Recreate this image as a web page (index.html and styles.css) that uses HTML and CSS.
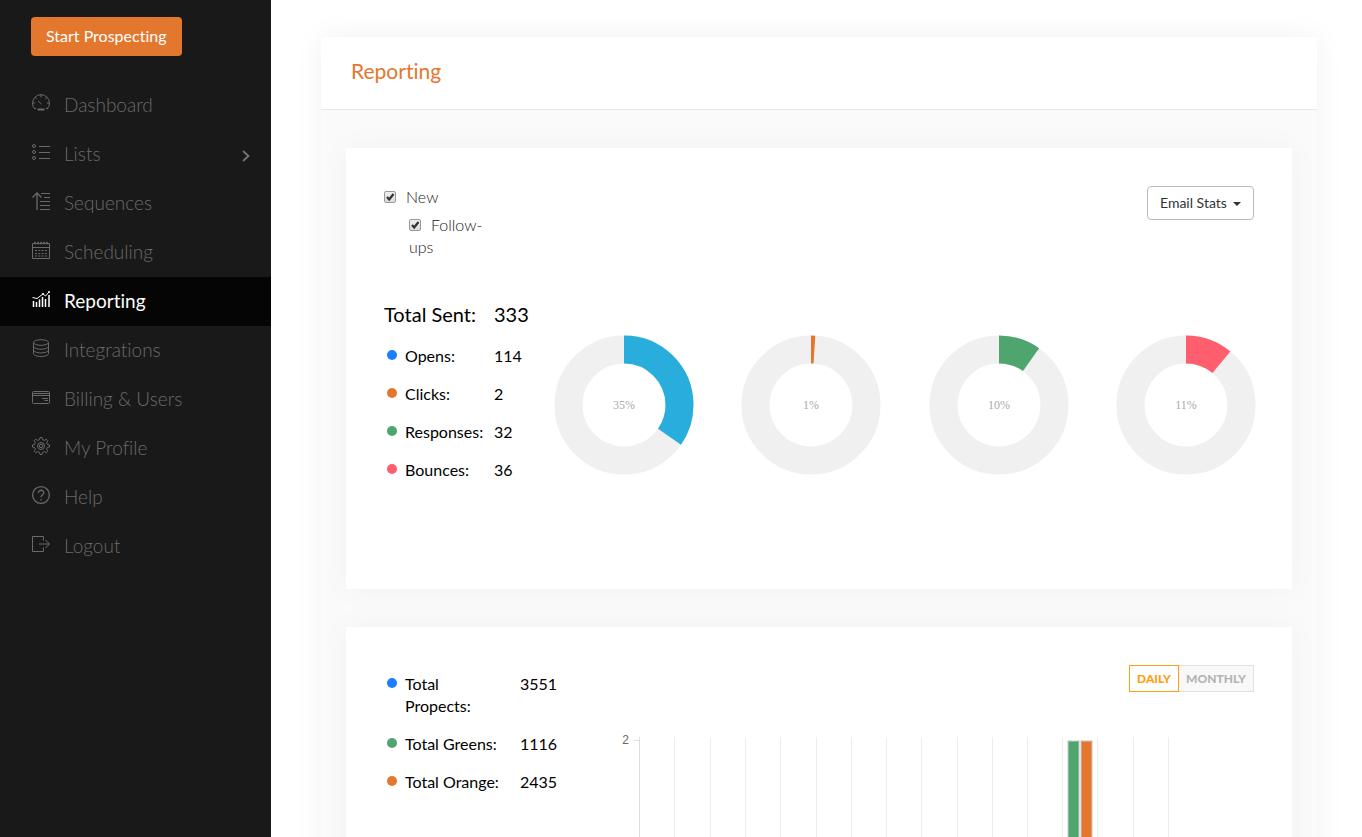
FILE: index.html
```html
<!DOCTYPE html>
<html lang="en">
<head>
    <meta charset="UTF-8">
    <meta name="viewport" content="width=device-width, initial-scale=1.0">
    <title>Reporting</title>
    <link rel="stylesheet" href="styles.css">
</head>
<body>
    <aside class="sidebar">
        <button type="button" class="btn-start">Start Prospecting</button>
        <nav>
            <a href="#" class="nav-item">
                <svg class="icon" viewBox="0 0 18 18"><path d="M4 14l-1.200 1A8.500 8.500 0 1 1 15.200 15L14 14M9 .8v2.700M.8 9h2.400M14.800 9h2.400M3.200 3.500l1.600 1.600M14.800 3.500l-1.600 1.600M6 7l3.500 3"/><path d="M5.500 15.500h7" stroke-width="2"/></svg>
                <span>Dashboard</span>
            </a>
            <a href="#" class="nav-item">
                <svg class="icon" viewBox="0 0 18 18"><circle cx="2" cy="3" r="1.500"/><circle cx="2" cy="9" r="1.500"/><circle cx="2" cy="15" r="1.500"/><path d="M7 3.500h11M7 9.500h11M7 15.500h11"/></svg>
                <span>Lists</span>
                <svg class="arrow" viewBox="0 0 10 14"><path d="M2 2l5.500 5L2 12"/></svg>
            </a>
            <a href="#" class="nav-item">
                <svg class="icon" viewBox="0 0 18 18"><path d="M5 18V1.500M.5 5.500L5 1l4.500 4.500" stroke-width="1.300"/><path d="M9 1.500h9M12 5.500h6M8 9.500h10M8 13.500h10M8 17.500h10"/></svg>
                <span>Sequences</span>
            </a>
            <a href="#" class="nav-item">
                <svg class="icon" viewBox="0 0 18 18"><path d="M.5 2.500h17v15H.5zM.5 6.500h17"/><path d="M3 .8v2.500M6 .8v2.500M9 .8v2.500M12 .8v2.500M15 .8v2.500" stroke-width="1.500"/><path d="M3 9.500h12M3 12.500h12M3 15h12" stroke-dasharray="2 1.300"/></svg>
                <span>Scheduling</span>
            </a>
            <a href="#" class="nav-item active">
                <svg class="icon" viewBox="0 0 18 18"><path d="M1.500 11v6M4.500 12v5M7.500 9.500V17M10.500 7v10M13.500 9v8M17 5v12" stroke-width="1.500"/><path d="M.5 7.500l4.500 1 6-4.500 2.500 2L17 2"/><circle cx="17" cy="2" r=".7"/><circle cx="11" cy="4" r=".7"/></svg>
                <span>Reporting</span>
            </a>
            <a href="#" class="nav-item">
                <svg class="icon" viewBox="0 0 18 18"><ellipse cx="9" cy="3.500" rx="7.500" ry="2.800"/><path d="M1.500 3.500v11c0 1.700 3.300 3 7.500 3s7.500-1.300 7.500-3v-11M1.500 7.200c0 1.700 3.300 3 7.500 3s7.500-1.300 7.500-3M1.500 10.900c0 1.700 3.300 3 7.500 3s7.500-1.300 7.500-3"/></svg>
                <span>Integrations</span>
            </a>
            <a href="#" class="nav-item">
                <svg class="icon" viewBox="0 0 18 18"><rect x=".5" y="3.500" width="17" height="12" rx="1"/><path d="M.5 5.500h17M.5 7.500h17M10 10.500h6M12.500 12.500h3.500"/></svg>
                <span>Billing &amp; Users</span>
            </a>
            <a href="#" class="nav-item">
                <svg class="icon" viewBox="0 0 18 18"><path d="M7.400 2.700L8 .5h2l.6 2.200 1.700.7 2-1.200 1.500 1.500-1.200 2 .7 1.700 2.200.6v2l-2.200.6-.7 1.700 1.200 2-1.500 1.500-2-1.200-1.700.7-.6 2.200H8l-.6-2.200-1.700-.7-2 1.200-1.500-1.500 1.200-2-.7-1.700L.5 10V8l2.200-.6.7-1.700-1.200-2 1.500-1.500 2 1.200z"/><circle cx="9" cy="9" r="3.500"/><circle cx="9" cy="9" r="1.700"/></svg>
                <span>My Profile</span>
            </a>
            <a href="#" class="nav-item">
                <svg class="icon help" viewBox="0 0 18 18"><circle cx="9" cy="9" r="8.400"/><path d="M6.300 7C6.300 3.200 12 3.500 11.800 6.800 11.600 8.800 9 8.800 9 11.300M9 13v1.500"/></svg>
                <span>Help</span>
            </a>
            <a href="#" class="nav-item">
                <svg class="icon" viewBox="0 0 18 18"><path d="M11.500 5.500v-4H.5v15h11v-4M7 9h10.500M13.500 5l4 4-4 4"/></svg>
                <span>Logout</span>
            </a>
        </nav>
    </aside>

    <main class="content">
        <section class="panel">
            <h1 class="panel-title">Reporting</h1>
            <div class="panel-body">

                <div class="card email-card">
                    <div class="card-top">
                        <div class="filters">
                            <label><input type="checkbox" checked>New</label>
                            <label class="sub"><input type="checkbox" checked>Follow-ups</label>
                        </div>
                        <div class="select-wrap">
                            <select aria-label="Stats type">
                                <option>Email Stats</option>
                            </select>
                        </div>
                    </div>
                    <div class="stats-row">
                        <table class="stats">
                            <tr class="total"><th colspan="2">Total Sent:</th><td>333</td></tr>
                            <tr><td class="dot-cell"><span class="dot blue"></span></td><th>Opens:</th><td>114</td></tr>
                            <tr><td class="dot-cell"><span class="dot orange"></span></td><th>Clicks:</th><td>2</td></tr>
                            <tr><td class="dot-cell"><span class="dot green"></span></td><th>Responses:</th><td>32</td></tr>
                            <tr><td class="dot-cell"><span class="dot red"></span></td><th>Bounces:</th><td>36</td></tr>
                        </table>
                        <!-- pathLength is 100, so each dash is a percentage -->
                        <div class="donuts">
                            <svg class="donut" viewBox="0 0 140 140">
                                <circle class="track" cx="70" cy="70" r="55.500"/>
                                <circle class="slice opens" cx="70" cy="70" r="55.500" pathLength="100" stroke-dasharray="34.700 100"/>
                                <text x="70" y="74">35%</text>
                            </svg>
                            <svg class="donut" viewBox="0 0 140 140">
                                <circle class="track" cx="70" cy="70" r="55.500"/>
                                <circle class="slice clicks" cx="70" cy="70" r="55.500" pathLength="100" stroke-dasharray="1 100"/>
                                <text x="70" y="74">1%</text>
                            </svg>
                            <svg class="donut" viewBox="0 0 140 140">
                                <circle class="track" cx="70" cy="70" r="55.500"/>
                                <circle class="slice responses" cx="70" cy="70" r="55.500" pathLength="100" stroke-dasharray="9.800 100"/>
                                <text x="70" y="74">10%</text>
                            </svg>
                            <svg class="donut" viewBox="0 0 140 140">
                                <circle class="track" cx="70" cy="70" r="55.500"/>
                                <circle class="slice bounces" cx="70" cy="70" r="55.500" pathLength="100" stroke-dasharray="11 100"/>
                                <text x="70" y="74">11%</text>
                            </svg>
                        </div>
                    </div>
                </div>

                <div class="card prospects-card">
                    <div class="prospects">
                        <table class="stats">
                            <tr><td class="dot-cell"><span class="dot blue"></span></td><th>Total Propects:</th><td>3551</td></tr>
                            <tr><td class="dot-cell"><span class="dot green"></span></td><th>Total Greens:</th><td>1116</td></tr>
                            <tr><td class="dot-cell"><span class="dot orange"></span></td><th>Total Orange:</th><td>2435</td></tr>
                        </table>
                    </div>
                    <div class="chart-col">
                        <div class="toggle">
                            <button type="button" class="on">DAILY</button><button type="button">MONTHLY</button>
                        </div>
                        <svg class="chart" viewBox="0 0 642 320">
                            <path class="grid" d="M62.500 0v310M98.500 0v310M133.500 0v310M168.500 0v310M204.500 0v310M239.500 0v310M274.500 0v310M309.500 0v310M345.500 0v310M380.500 0v310M415.500 0v310M450.500 0v310M485.500 0v310M521.500 0v310M556.500 0v310"/>
                            <path class="axis" d="M27.500 0v310M22 3.500h5"/>
                            <text x="17" y="7">2</text>
                            <rect class="bar green-bar" x="456" y="4" width="11" height="306"/>
                            <rect class="bar orange-bar" x="469" y="4" width="11" height="306"/>
                        </svg>
                    </div>
                </div>

            </div>
        </section>
    </main>
</body>
</html>
```

FILE: styles.css
```css
* {
    box-sizing: border-box;
}
body {
    margin: 0;
    display: flex;
    height: 100vh;
    overflow: hidden;
    background: #fff;
    color: #000;
    font-family: Lato, "Open Sans", sans-serif;
    font-size: 16px;
    font-variant-ligatures: none;
    line-height: 22px;
}

/* Sidebar */
.sidebar {
    flex: 0 0 271px;
    padding-top: 17px;
    background: #191919;
}
.btn-start {
    height: 39px;
    margin: 0 0 25px 31px;
    padding: 0 15px 2px;
    border: 0;
    border-radius: 4px;
    background: #e4772e;
    color: #fff;
    font: 16px Lato, sans-serif;
    font-variant-ligatures: none;
    cursor: pointer;
}
.nav-item {
    display: flex;
    align-items: center;
    height: 49px;
    padding: 0 20px 2px 32px;
    color: #6a6a6a;
    font-size: 19px;
    font-weight: 300;
    text-decoration: none;
}
.nav-item span {
    flex: 1;
}
.nav-item.active {
    background: #050505;
    color: #fff;
    font-weight: 400;
}
.icon {
    width: 18px;
    height: 18px;
    margin: 0 14px 4px 0;
    overflow: visible;
    fill: none;
    stroke: currentColor;
    stroke-width: 1;
}
.icon.help {
    stroke-width: 1.3;
}
.arrow {
    width: 10px;
    height: 14px;
    margin-top: 4px;
    fill: none;
    stroke: #777;
    stroke-width: 1.7;
}

/* Panel */
.content {
    flex: 1;
    min-width: 0;
    padding: 37px 45px 37px 50px;
}
.panel {
    border-radius: 4px;
    background: #fff;
    box-shadow: 0 0 30px rgba(0, 0, 0, 0.06);
}
.panel-title {
    margin: 0;
    padding: 22px 30px 26px;
    border-bottom: 1px solid #e8e8e8;
    color: #e4772e;
    font-size: 21px;
    font-weight: 400;
    line-height: 24px;
}
.panel-body {
    display: grid;
    gap: 38px;
    padding: 38px 25px;
    background: #fafafa;
}
.card {
    min-width: 0;
    padding: 38px;
    background: #fff;
    box-shadow: 0 0 30px rgba(0, 0, 0, 0.04);
}

/* Email stats */
.card-top {
    display: flex;
    justify-content: space-between;
    align-items: flex-start;
    height: 108px;
}
.filters {
    width: 104px;
    color: #222;
    font-weight: 300;
}
.filters label {
    display: block;
    margin-bottom: 6px;
}
.filters .sub {
    margin-left: 25px;
}
.filters input {
    appearance: none;
    width: 12px;
    height: 12px;
    margin: 0 10px 0 0;
    border: 1px solid #999;
    border-radius: 2px;
    background: url("data:image/svg+xml,%3Csvg xmlns='http://www.w3.org/2000/svg' viewBox='0 0 10 10'%3E%3Cpath d='M2 5l2.200 2.500L8.500 2' fill='none' stroke='%23333' stroke-width='2.200'/%3E%3C/svg%3E"), linear-gradient(#eee, #ddd);
}
.select-wrap {
    position: relative;
}
.select-wrap select {
    appearance: none;
    width: 107px;
    height: 34px;
    padding: 0 12px 2px;
    border: 1px solid #bbb;
    border-radius: 4px;
    background: #fff;
    color: #333;
    font: 14px Lato, sans-serif;
}
.select-wrap::after {
    content: "";
    position: absolute;
    top: 16px;
    right: 13px;
    border: 4px solid transparent;
    border-top-color: #333;
    border-bottom: 0;
    pointer-events: none;
}
.stats-row {
    display: flex;
    padding-bottom: 62px;
}
.stats {
    width: 146px;
    border-collapse: collapse;
    align-self: flex-start;
}
.stats th,
.stats td {
    padding: 8px 0;
    font-weight: 400;
    text-align: left;
    vertical-align: top;
}
.stats th {
    width: 89px;
}
.stats .total th,
.stats .total td {
    padding: 9px 0 12px;
    font-size: 20px;
}
.stats .dot-cell {
    width: 21px;
    padding-left: 3px;
}
.dot {
    display: block;
    width: 10px;
    height: 10px;
    margin-top: 5px;
    border-radius: 50%;
}
.blue { background: #1b7fff; }
.orange { background: #e4772e; }
.green { background: #4ea66e; }
.red { background: #ff5e6e; }
.donuts {
    flex: 1;
    display: grid;
    grid-template-columns: repeat(4, 1fr);
    justify-items: center;
    margin: 41px -26px 0 0;
}
.donut {
    width: 140px;
    height: 140px;
}
.donut circle {
    fill: none;
    stroke-width: 28px;
}
.donut text {
    fill: #aaa;
    font: 12px "Liberation Serif", serif;
    text-anchor: middle;
}
.track {
    stroke: #f0f0f0;
}
.slice {
    transform: rotate(-90deg);
    transform-origin: center;
}
.opens { stroke: #29addc; }
.clicks { stroke: #e4772e; }
.responses { stroke: #4ea66e; }
.bounces { stroke: #ff5e6e; }

/* Prospects */
.prospects-card {
    display: flex;
}
.prospects {
    flex: 0 0 228px;
}
.prospects .stats {
    width: 174px;
}
.prospects .stats th {
    width: 115px;
    padding-right: 12px;
}
.chart-col {
    flex: 1;
    min-width: 0;
}
.toggle {
    display: flex;
    justify-content: flex-end;
    margin-bottom: 45px;
}
.toggle button {
    height: 27px;
    padding: 0 7px;
    border: 1px solid #e0e0e0;
    border-left: 0;
    background: #f8f8f8;
    color: #b4b4b4;
    font: 900 12px Lato, sans-serif;
    cursor: pointer;
}
.toggle .on {
    border: 1px solid #ff9e0f;
    background: #fff;
    color: #ff9e0f;
}
.chart {
    display: block;
    width: 100%;
    overflow: visible;
}
.chart text {
    fill: #666;
    font: 12px "Liberation Sans", sans-serif;
    text-anchor: end;
}
.grid {
    stroke: #ededed;
}
.axis {
    stroke: #ddd;
}
.bar {
    stroke: rgba(200, 200, 200, 0.5);
    stroke-width: 2px;
}
.green-bar { fill: #4ea66e; }
.orange-bar { fill: #e4772e; }
```
